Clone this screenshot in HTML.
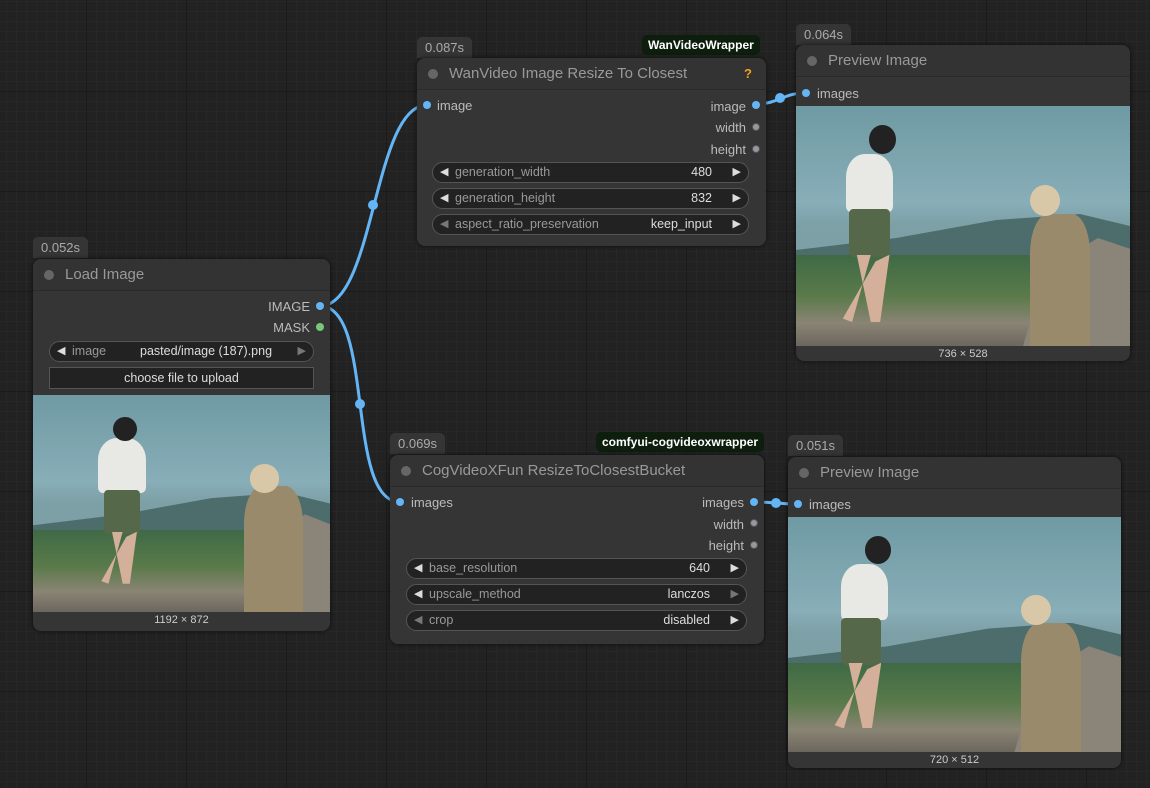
<!DOCTYPE html>
<html><head><meta charset="utf-8"><style>
*{margin:0;padding:0;box-sizing:border-box}
body{width:1150px;height:788px;overflow:hidden;position:relative;font-family:"Liberation Sans",Arial,sans-serif;
background-color:#222;
background-image:linear-gradient(#1b1b1b 1px,transparent 1px),linear-gradient(90deg,#1b1b1b 1px,transparent 1px),linear-gradient(#272727 1px,transparent 1px),linear-gradient(90deg,#272727 1px,transparent 1px);
background-size:100px 100px,100px 100px,10px 10px,10px 10px;background-position:-14px -9px}
.badge{position:absolute;background:#353535;color:#aaa;font-size:13px;height:21px;line-height:21px;padding:0 8px;border-radius:5px 5px 0 0}
.tag{position:absolute;background:#0d1e0d;color:#fff;font-weight:bold;font-size:12px;height:20px;line-height:20px;padding:0 6px;border-radius:5px}
.node{position:absolute;background:#353535;border-radius:8px;box-shadow:0 0 4px #000a}
.title{height:32px;border-bottom:1px solid #2a2a2a;background:#333;border-radius:8px 8px 0 0;color:#999;font-size:15px;line-height:32px;padding-left:32px;position:relative}
.title:before{content:"";position:absolute;left:11px;top:11px;width:10px;height:10px;border-radius:50%;background:#666}
.lbl{position:absolute;font-size:13px;color:#bbb}
.dot{position:absolute;width:8px;height:8px;border-radius:50%}
.b{background:#64b5f6}.g{background:#7ac67a}.k{background:#9a96a0;border:1px solid #555}
.w{position:absolute;height:21px;border:1px solid #555;border-radius:11px;background:#222;font-size:12.5px;color:#999;line-height:19px}
.w .n{position:absolute;left:22px}
.w .v{position:absolute;right:36px;color:#ddd}
.w .la{position:absolute;left:7px;color:#ddd;font-size:11px}
.w .ra{position:absolute;right:7px;color:#ddd;font-size:11px}
.dim{color:#777!important}
.img{position:absolute;overflow:hidden;background:linear-gradient(#6f9aa3 0%,#88aeb8 40%,#7d9fa6 50%)}
.img i{position:absolute;display:block}
.cap{position:absolute;font-size:11px;color:#ccc;text-align:center}
</style></head><body>
<svg width="1150" height="788" style="position:absolute;left:0;top:0">
<g stroke="#64b5f6" stroke-width="3" fill="none">
<path d="M320 306 C375 306 373 105 427 105"/>
<path d="M320 306 C375 306 345 502 400 502"/>
<path d="M755 104 C780 104 782 93 806 93"/>
<path d="M754 502 C776 502 776 504 798 504"/>
</g>
<g fill="#64b5f6"><circle cx="373" cy="205" r="5"/><circle cx="360" cy="404" r="5"/><circle cx="780" cy="98" r="5"/><circle cx="776" cy="503" r="5"/></g>
</svg>

<template id="t"></template>

<!-- Load Image -->
<div class="badge" style="left:33px;top:237px">0.052s</div>
<div class="node" style="left:33px;top:259px;width:297px;height:372px">
<div class="title">Load Image</div>
<div class="lbl" style="right:20px;top:40px">IMAGE</div><div class="dot b" style="right:6px;top:43px"></div>
<div class="lbl" style="right:20px;top:61px">MASK</div><div class="dot g" style="right:6px;top:64px"></div>
<div class="w" style="left:16px;top:82px;width:265px"><span class="la">◀</span><span class="n">image</span><span style="position:absolute;left:90px;color:#ddd">pasted/image (187).png</span><span class="ra dim">▶</span></div>
<div style="position:absolute;left:16px;top:108px;width:265px;height:22px;border:1px solid #555;background:#222;color:#ddd;font-size:12.5px;text-align:center;line-height:20px">choose file to upload</div>
<div class="img" style="left:0;top:136px;width:297px;height:217px">
<i style="left:0;top:45%;width:100%;height:25%;background:#4d6d6c;clip-path:polygon(0 60%,30% 40%,60% 10%,85% 0,100% 20%,100% 100%,0 100%)"></i>
<i style="left:0;top:62%;width:100%;height:38%;background:linear-gradient(#3f6a46,#5a7a4a 45%,#8a8474 75%,#6c675e)"></i>
<i style="left:72%;top:55%;width:28%;height:45%;background:#8a8578;clip-path:polygon(20% 30%,70% 0,100% 10%,100% 100%,0 100%)"></i>
<i style="left:22%;top:20%;width:16%;height:25%;background:#e8e8e4;border-radius:40% 40% 10% 10%"></i>
<i style="left:27%;top:10%;width:8%;height:11%;background:#222;border-radius:50%"></i>
<i style="left:24%;top:44%;width:12%;height:20%;background:#56684a;border-radius:10%"></i>
<i style="left:23%;top:63%;width:12%;height:24%;background:#d4b09a;clip-path:polygon(30% 0,60% 0,20% 100%,0 95%,70% 10%,100% 0,80% 100%,60% 100%)"></i>
<i style="left:71%;top:42%;width:20%;height:58%;background:#9a8a6c;border-radius:30% 30% 0 0"></i>
<i style="left:73%;top:32%;width:10%;height:13%;background:#d8c8a8;border-radius:50%"></i>
</div>
<div class="cap" style="left:0;width:297px;top:355px">1192 × 872</div>
</div>

<!-- WanVideo -->
<div class="badge" style="left:417px;top:37px">0.087s</div>
<div class="tag" style="left:642px;top:35px">WanVideoWrapper</div>
<div class="node" style="left:417px;top:58px;width:349px;height:188px">
<div class="title">WanVideo Image Resize To Closest<span style="position:absolute;right:14px;color:#f0a020;font-weight:bold;font-size:13px">?</span></div>
<div class="dot b" style="left:6px;top:43px"></div><div class="lbl" style="left:20px;top:40px">image</div>
<div class="lbl" style="right:20px;top:41px">image</div><div class="dot b" style="right:6px;top:43px"></div>
<div class="lbl" style="right:20px;top:62px">width</div><div class="dot k" style="right:6px;top:65px"></div>
<div class="lbl" style="right:20px;top:84px">height</div><div class="dot k" style="right:6px;top:87px"></div>
<div class="w" style="left:15px;top:104px;width:317px"><span class="la">◀</span><span class="n">generation_width</span><span class="v">480</span><span class="ra">▶</span></div>
<div class="w" style="left:15px;top:130px;width:317px"><span class="la">◀</span><span class="n">generation_height</span><span class="v">832</span><span class="ra">▶</span></div>
<div class="w" style="left:15px;top:156px;width:317px"><span class="la dim">◀</span><span class="n">aspect_ratio_preservation</span><span class="v">keep_input</span><span class="ra">▶</span></div>
</div>

<!-- Preview 1 -->
<div class="badge" style="left:796px;top:24px">0.064s</div>
<div class="node" style="left:796px;top:45px;width:334px;height:316px">
<div class="title">Preview Image</div>
<div class="dot b" style="left:6px;top:44px"></div><div class="lbl" style="left:21px;top:41px">images</div>
<div class="img" style="left:0;top:61px;width:334px;height:240px">
<i style="left:0;top:45%;width:100%;height:25%;background:#4d6d6c;clip-path:polygon(0 60%,30% 40%,60% 10%,85% 0,100% 20%,100% 100%,0 100%)"></i>
<i style="left:0;top:62%;width:100%;height:38%;background:linear-gradient(#3f6a46,#5a7a4a 45%,#8a8474 75%,#6c675e)"></i>
<i style="left:68%;top:55%;width:32%;height:45%;background:#8a8578;clip-path:polygon(20% 30%,70% 0,100% 10%,100% 100%,0 100%)"></i>
<i style="left:15%;top:20%;width:14%;height:24%;background:#e8e8e4;border-radius:40% 40% 10% 10%"></i>
<i style="left:22%;top:8%;width:8%;height:12%;background:#222;border-radius:50%"></i>
<i style="left:16%;top:43%;width:12%;height:20%;background:#56684a;border-radius:10%"></i>
<i style="left:14%;top:62%;width:14%;height:28%;background:#d4b09a;clip-path:polygon(30% 0,60% 0,20% 100%,0 95%,70% 10%,100% 0,80% 100%,60% 100%)"></i>
<i style="left:70%;top:45%;width:18%;height:55%;background:#9a8a6c;border-radius:30% 30% 0 0"></i>
<i style="left:70%;top:33%;width:9%;height:13%;background:#d8c8a8;border-radius:50%"></i>
</div>
<div class="cap" style="left:0;width:334px;top:303px">736 × 528</div>
</div>

<!-- CogVideo -->
<div class="badge" style="left:390px;top:433px">0.069s</div>
<div class="tag" style="left:596px;top:432px">comfyui-cogvideoxwrapper</div>
<div class="node" style="left:390px;top:455px;width:374px;height:189px">
<div class="title">CogVideoXFun ResizeToClosestBucket</div>
<div class="dot b" style="left:6px;top:43px"></div><div class="lbl" style="left:21px;top:40px">images</div>
<div class="lbl" style="right:20px;top:40px">images</div><div class="dot b" style="right:6px;top:43px"></div>
<div class="lbl" style="right:20px;top:62px">width</div><div class="dot k" style="right:6px;top:64px"></div>
<div class="lbl" style="right:20px;top:83px">height</div><div class="dot k" style="right:6px;top:86px"></div>
<div class="w" style="left:16px;top:103px;width:341px"><span class="la">◀</span><span class="n">base_resolution</span><span class="v">640</span><span class="ra">▶</span></div>
<div class="w" style="left:16px;top:129px;width:341px"><span class="la">◀</span><span class="n">upscale_method</span><span class="v">lanczos</span><span class="ra dim">▶</span></div>
<div class="w" style="left:16px;top:155px;width:341px"><span class="la dim">◀</span><span class="n">crop</span><span class="v">disabled</span><span class="ra">▶</span></div>
</div>

<!-- Preview 2 -->
<div class="badge" style="left:788px;top:435px">0.051s</div>
<div class="node" style="left:788px;top:457px;width:333px;height:311px">
<div class="title">Preview Image</div>
<div class="dot b" style="left:6px;top:43px"></div><div class="lbl" style="left:21px;top:40px">images</div>
<div class="img" style="left:0;top:60px;width:333px;height:235px">
<i style="left:0;top:45%;width:100%;height:25%;background:#4d6d6c;clip-path:polygon(0 60%,30% 40%,60% 10%,85% 0,100% 20%,100% 100%,0 100%)"></i>
<i style="left:0;top:62%;width:100%;height:38%;background:linear-gradient(#3f6a46,#5a7a4a 45%,#8a8474 75%,#6c675e)"></i>
<i style="left:68%;top:55%;width:32%;height:45%;background:#8a8578;clip-path:polygon(20% 30%,70% 0,100% 10%,100% 100%,0 100%)"></i>
<i style="left:16%;top:20%;width:14%;height:24%;background:#e8e8e4;border-radius:40% 40% 10% 10%"></i>
<i style="left:23%;top:8%;width:8%;height:12%;background:#222;border-radius:50%"></i>
<i style="left:16%;top:43%;width:12%;height:20%;background:#56684a;border-radius:10%"></i>
<i style="left:14%;top:62%;width:14%;height:28%;background:#d4b09a;clip-path:polygon(30% 0,60% 0,20% 100%,0 95%,70% 10%,100% 0,80% 100%,60% 100%)"></i>
<i style="left:70%;top:45%;width:18%;height:55%;background:#9a8a6c;border-radius:30% 30% 0 0"></i>
<i style="left:70%;top:33%;width:9%;height:13%;background:#d8c8a8;border-radius:50%"></i>
</div>
<div class="cap" style="left:0;width:333px;top:297px">720 × 512</div>
</div>
</body></html>
